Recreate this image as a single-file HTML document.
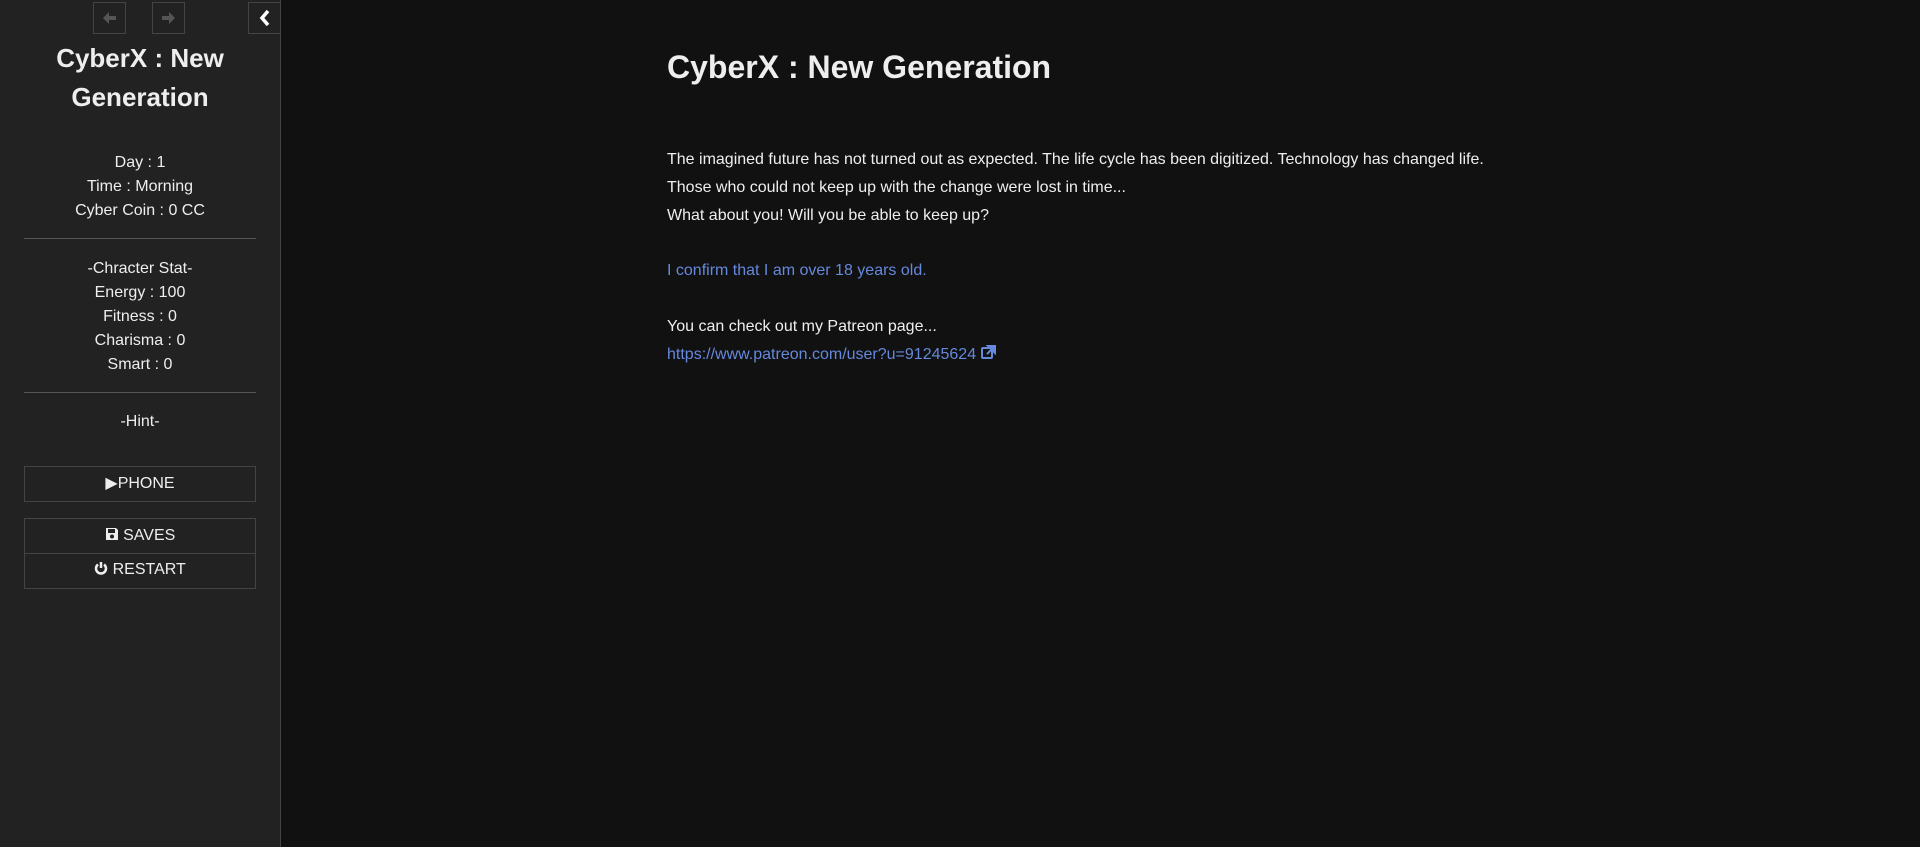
<!DOCTYPE html>
<html><head><style>
body{margin:0;background:#111;color:#eee;font-family:"Liberation Sans",Arial,sans-serif;width:1920px;height:847px;overflow:hidden;position:relative}
#side{position:absolute;left:0;top:0;width:280px;height:847px;background:#222;border-right:1px solid #444;text-align:center;font-size:16px}
.btn{position:absolute;top:2px;width:33px;height:32px;border:1px solid #444;box-sizing:border-box}
.t{position:absolute;left:0;width:280px;font-weight:bold;font-size:26px;line-height:39px;top:39px}
.st{position:absolute;left:0;width:280px;line-height:24px}
hr{position:absolute;left:24px;width:232px;margin:0;border:0;border-top:1px solid #555}
.mb{position:absolute;left:24px;width:232px;height:36px;box-sizing:border-box;border:1px solid #444;line-height:34px;font-size:16px}
#main{position:absolute;left:667px;top:0;font-size:16px}
a{color:#68d;text-decoration:none}
</style></head><body>
<div id="side">
<div class="btn" style="left:93px"><svg width="31" height="30" viewBox="0 0 31 30"><path d="M9 15l6-6v4h7v4h-7v4z" fill="#555"/></svg></div>
<div class="btn" style="left:152px"><svg width="31" height="30" viewBox="0 0 31 30"><path d="M22 15l-6-6v4H9v4h7v4z" fill="#555"/></svg></div>
<div class="btn" style="left:248px;width:33px"><svg width="31" height="30" viewBox="0 0 31 30"><path d="M19 8l-6 7 6 7" stroke="#fff" stroke-width="3.5" fill="none"/></svg></div>
<div class="t">CyberX : New<br>Generation</div>
<div class="st" style="top:151px">Day : 1<br>Time : Morning<br>Cyber Coin : 0 CC</div>
<hr style="top:238px">
<div class="st" style="top:257px">-Chracter Stat-<br>Energy : 100<br>Fitness : 0<br>Charisma : 0<br>Smart : 0</div>
<hr style="top:392px">
<div class="st" style="top:410px">-Hint-</div>
<div class="mb" style="top:466px">▶PHONE</div>
<div class="mb" style="top:518px"><svg width="14" height="14" viewBox="0 0 14 14" style="vertical-align:-1px"><path d="M1 1h10l2 2v10H1z" fill="#eee"/><rect x="3" y="2" width="7" height="4" fill="#222"/><circle cx="7" cy="9.5" r="2" fill="#222"/></svg> SAVES</div>
<div class="mb" style="top:553px;border-top:none;height:36px;line-height:34px"><svg width="14" height="14" viewBox="0 0 14 14" style="vertical-align:-1px"><path d="M4 3.5A5 5 0 1 0 10 3.5" stroke="#eee" stroke-width="2.5" fill="none"/><path d="M7 1v6" stroke="#eee" stroke-width="2.5"/></svg> RESTART</div>
</div>
<div id="main">
<div style="position:absolute;top:49px;font-size:32px;font-weight:bold;white-space:nowrap">CyberX : New Generation</div>
<div style="position:absolute;top:146px;line-height:28px;white-space:nowrap">The imagined future has not turned out as expected. The life cycle has been digitized. Technology has changed life.<br>Those who could not keep up with the change were lost in time...<br>What about you! Will you be able to keep up?</div>
<div style="position:absolute;top:262px;white-space:nowrap"><a>I confirm that I am over 18 years old.</a></div>
<div style="position:absolute;top:313px;line-height:28px;white-space:nowrap">You can check out my Patreon page...<br><a>https://www.patreon.com/user?u=91245624 <svg width="15" height="14" viewBox="0 0 15 14"><rect x="1" y="3" width="10" height="10" rx="1" fill="none" stroke="#68d" stroke-width="2"/><path d="M7 1h7v7z M13 2L6 9" fill="#68d" stroke="#68d" stroke-width="2"/></svg></a></div>
</div>
</body></html>
